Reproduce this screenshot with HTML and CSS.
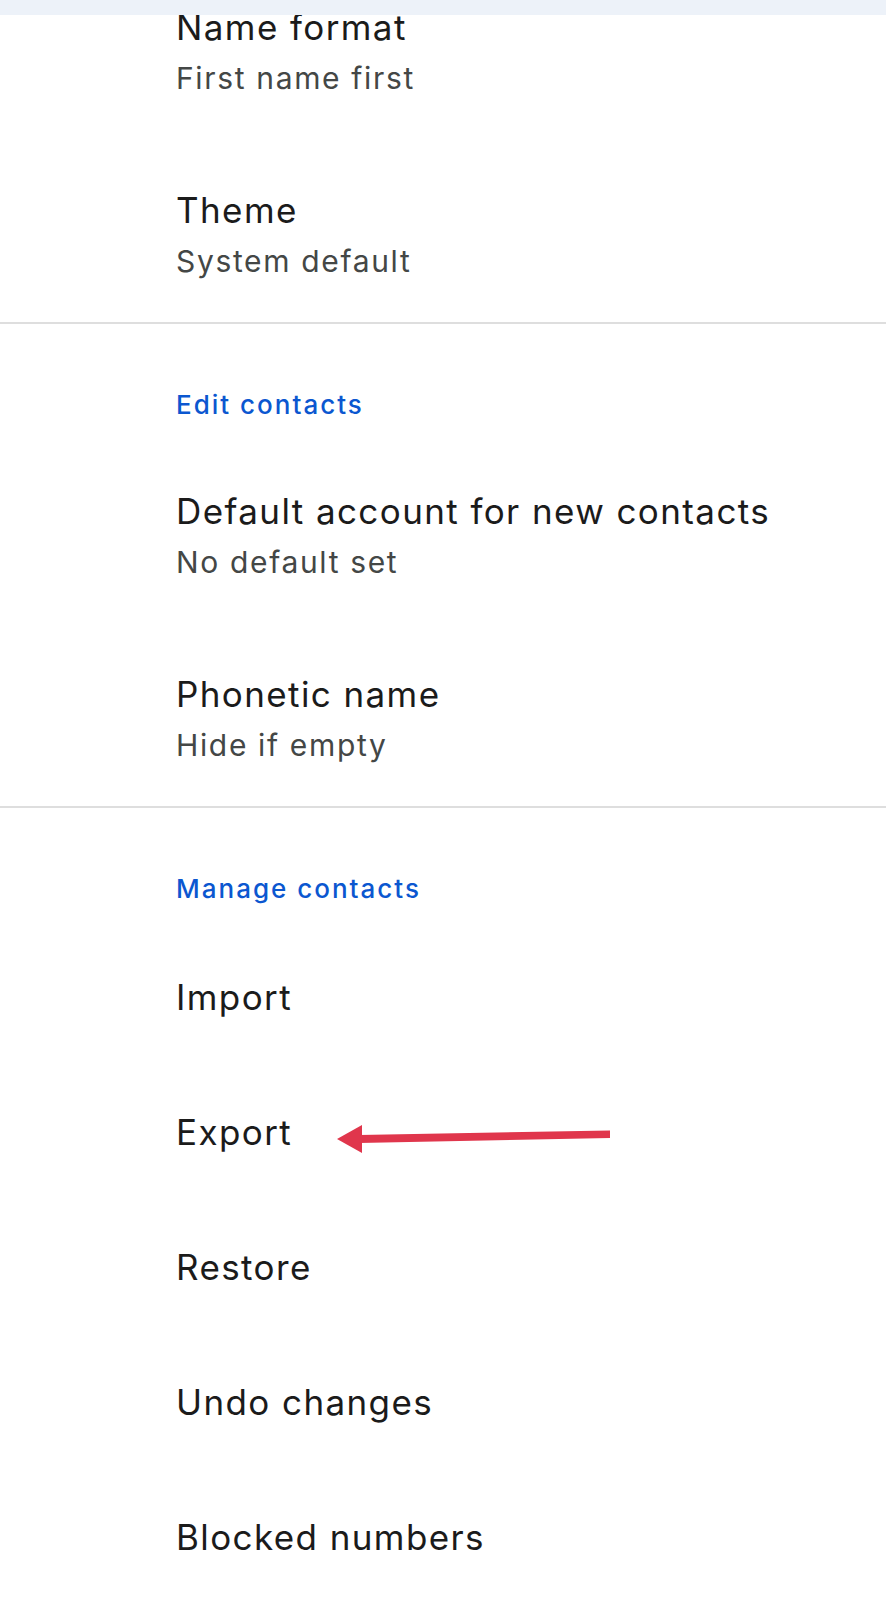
FILE: index.html
```html
<!DOCTYPE html>
<html lang="en">
<head>
<meta charset="utf-8">
<title>Contacts settings</title>
<link rel="stylesheet" href="styles.css">
</head>
<body>
<div class="screen">
  <div class="topbar"></div>
  <div class="list">
    <section class="group">
      <div class="item">
        <div class="title">Name format</div>
        <div class="subtitle">First name first</div>
      </div>
      <div class="item">
        <div class="title">Theme</div>
        <div class="subtitle">System default</div>
      </div>
    </section>
    <section class="group">
      <div class="header">Edit contacts</div>
      <div class="item">
        <div class="title">Default account for new contacts</div>
        <div class="subtitle">No default set</div>
      </div>
      <div class="item">
        <div class="title">Phonetic name</div>
        <div class="subtitle">Hide if empty</div>
      </div>
    </section>
    <section class="group last">
      <div class="header">Manage contacts</div>
      <div class="item single"><div class="title">Import</div></div>
      <div class="item single export">
        <div class="title">Export</div>
        <svg class="arrow" width="290" height="40" viewBox="0 0 290 40" aria-hidden="true">
          <polygon points="0,20 25,6 25,34" fill="#e0364c"/>
          <polygon points="22,16 273,11.5 273,19 22,24" fill="#e0364c"/>
        </svg>
      </div>
      <div class="item single"><div class="title">Restore</div></div>
      <div class="item single"><div class="title">Undo changes</div></div>
      <div class="item single"><div class="title">Blocked numbers</div></div>
    </section>
  </div>
</div>
</body>
</html>
```

FILE: styles.css
```css
html, body {
  margin: 0;
  padding: 0;
  background: #ffffff;
}

body {
  font-family: Inter, Roboto, "Noto Sans", Arial, sans-serif;
}

.screen {
  position: relative;
  width: 886px;
  height: 1600px;
  overflow: hidden;
  background: #ffffff;
}

.topbar {
  position: absolute;
  top: 0;
  left: 0;
  right: 0;
  height: 15px;
  background: #edf2f9;
  z-index: 2;
}

.list {
  margin-top: -45px;
  display: flex;
  flex-direction: column;
}

.group {
  display: flex;
  flex-direction: column;
  border-bottom: 2px solid #dedede;
}

.group.last {
  border-bottom: none;
}

.header {
  padding: 63px 0 16px 176px;
  font-size: 26px;
  line-height: 36px;
  font-weight: 500;
  letter-spacing: 2px;
  color: #0b57d0;
}

.item {
  position: relative;
  padding: 46.5px 0 35px 176px;
}

.item.single {
  padding: 49px 0 36px 176px;
}

.title {
  font-size: 35px;
  line-height: 50px;
  letter-spacing: 1.4px;
  color: #1b1b1b;
}

.subtitle {
  font-size: 30px;
  line-height: 52px;
  letter-spacing: 1.65px;
  color: #444746;
}

.arrow {
  position: absolute;
  left: 337px;
  top: 61px;
}
```
